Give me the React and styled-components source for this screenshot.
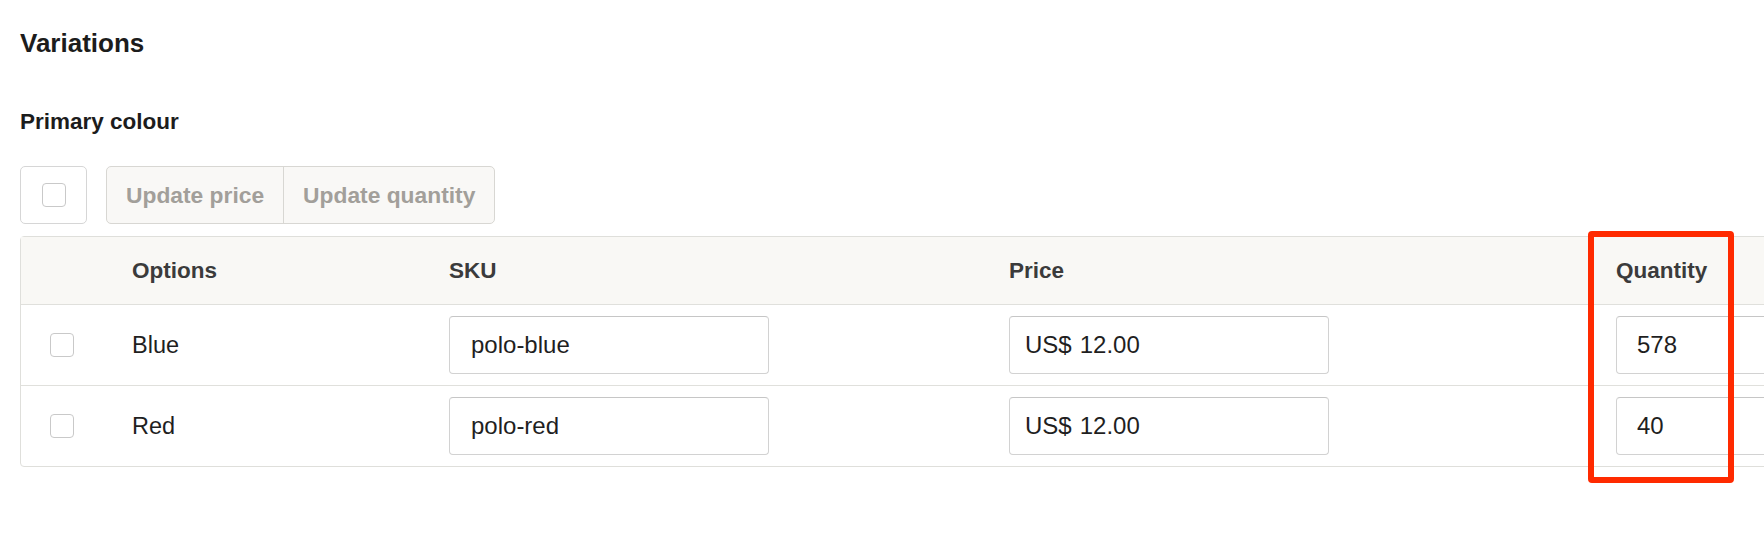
import React from 'react';
import styled, { createGlobalStyle } from 'styled-components';

const GlobalStyle = createGlobalStyle`
  html {
    overflow: hidden;
  }
  html, body {
    margin: 0;
    padding: 0;
    background: #ffffff;
  }
  body {
    min-height: 100vh;
    font-family: "Liberation Sans", Arial, sans-serif;
    color: #1f1f1f;
  }
`;

const Page = styled.div`
  box-sizing: border-box;
  min-height: 536px;
  padding: 28px 0 40px 20px;
`;

const Title = styled.h2`
  margin: 0;
  font-size: 26px;
  line-height: 30px;
  font-weight: 700;
  color: #1c1c1c;
`;

const Subtitle = styled.h3`
  margin: 51px 0 0;
  font-size: 22.5px;
  line-height: 26px;
  font-weight: 700;
  color: #1c1c1c;
`;

const Toolbar = styled.div`
  margin-top: 31px;
  display: flex;
  gap: 19px;
  height: 58px;
`;

const SelectAll = styled.div`
  box-sizing: border-box;
  width: 67px;
  height: 58px;
  border: 1px solid #d6d6d6;
  border-radius: 5px;
  display: flex;
  align-items: center;
  justify-content: center;
`;

const Check = styled.span`
  box-sizing: border-box;
  display: inline-block;
  width: 24px;
  height: 24px;
  border: 1.5px solid #c9c9c9;
  border-radius: 4px;
  background: #fff;
`;

const ButtonGroup = styled.div`
  display: flex;
  border: 1px solid #d8d7d3;
  border-radius: 5px;
  background: #f9f8f6;
  overflow: hidden;
`;

const GroupButton = styled.button`
  font-family: inherit;
  font-size: 22.8px;
  font-weight: 700;
  color: #a29f9a;
  background: transparent;
  border: none;
  padding: 0 19px;
  cursor: default;
  & + & {
    border-left: 1px solid #d8d7d3;
  }
`;

const TableWrap = styled.div`
  position: relative;
  margin-top: 12px;
  width: max-content;
`;

const Table = styled.div`
  display: grid;
  grid-template-columns: 111px 317px 560px 607px 400px;
  border: 1px solid #dfdfdb;
  border-radius: 4px;
`;

const HeadCell = styled.div`
  height: 67px;
  display: flex;
  align-items: center;
  background: #f9f8f5;
  border-bottom: 1px solid #e0e0dc;
  font-size: 22.5px;
  font-weight: 700;
  color: #3b3b3b;
`;

const Cell = styled.div`
  height: 80px;
  display: flex;
  align-items: center;
  padding-left: ${p => p.$pad || 0}px;
  border-bottom: ${p => (p.$last ? 'none' : '1px solid #e0e0dc')};
  font-size: 23.5px;
  color: #1f1f1f;
`;

const Field = styled.div`
  box-sizing: border-box;
  width: 320px;
  height: 58px;
  display: flex;
  align-items: center;
  gap: 8px;
  padding-left: ${p => p.$pad}px;
  border: 1px solid #d2d2d2;
  border-top-color: #c6c6c6;
  border-radius: 4px;
  background: #fff;
`;

const Prefix = styled.span`
  font-size: 24px;
  color: #1f1f1f;
`;

const FieldInput = styled.input`
  flex: 1;
  min-width: 0;
  border: none;
  outline: none;
  padding: 0;
  background: transparent;
  font-family: inherit;
  font-size: 24px;
  color: #1f1f1f;
`;

const Highlight = styled.div`
  position: absolute;
  left: 1568px;
  top: -5px;
  width: 146px;
  height: 252px;
  box-sizing: border-box;
  border: 6px solid #ff2a00;
  border-radius: 4px;
  pointer-events: none;
`;

const variants = [
  { option: 'Blue', sku: 'polo-blue', price: '12.00', qty: '578' },
  { option: 'Red', sku: 'polo-red', price: '12.00', qty: '40' },
];

export default function App() {
  return (
    <Page>
      <GlobalStyle />
      <Title>Variations</Title>
      <Subtitle>Primary colour</Subtitle>
      <Toolbar>
        <SelectAll>
          <Check />
        </SelectAll>
        <ButtonGroup>
          <GroupButton>Update price</GroupButton>
          <GroupButton>Update quantity</GroupButton>
        </ButtonGroup>
      </Toolbar>
      <TableWrap>
        <Table>
          <HeadCell />
          <HeadCell>Options</HeadCell>
          <HeadCell>SKU</HeadCell>
          <HeadCell>Price</HeadCell>
          <HeadCell>Quantity</HeadCell>
          {variants.map((v, i) => {
            const last = i === variants.length - 1;
            return (
              <React.Fragment key={v.sku}>
                <Cell $last={last} $pad={29}>
                  <Check />
                </Cell>
                <Cell $last={last}>{v.option}</Cell>
                <Cell $last={last}>
                  <Field $pad={21}>
                    <FieldInput readOnly defaultValue={v.sku} />
                  </Field>
                </Cell>
                <Cell $last={last}>
                  <Field $pad={15}>
                    <Prefix>US$</Prefix>
                    <FieldInput readOnly defaultValue={v.price} />
                  </Field>
                </Cell>
                <Cell $last={last}>
                  <Field $pad={20}>
                    <FieldInput readOnly defaultValue={v.qty} />
                  </Field>
                </Cell>
              </React.Fragment>
            );
          })}
        </Table>
        <Highlight />
      </TableWrap>
    </Page>
  );
}
